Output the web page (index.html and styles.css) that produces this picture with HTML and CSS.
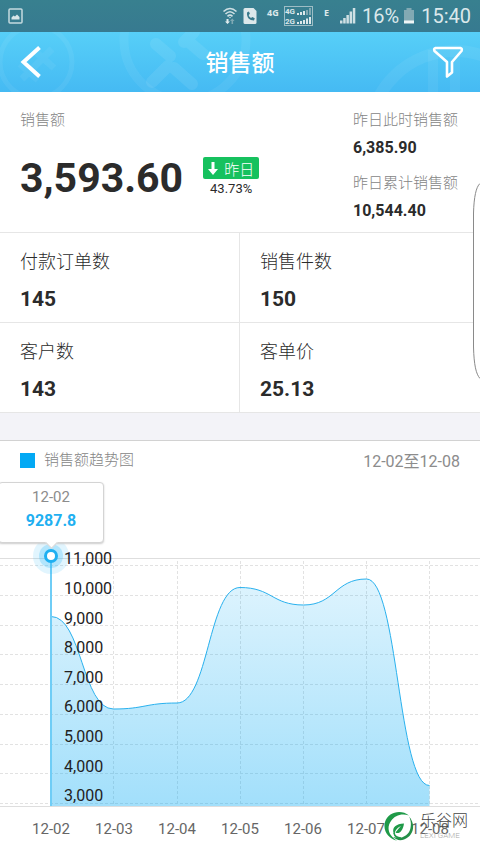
FILE: index.html
```html
<!DOCTYPE html>
<html lang="zh-CN">
<head>
<meta charset="utf-8">
<meta name="viewport" content="width=device-width, initial-scale=1">
<title>销售额</title>
<link rel="stylesheet" href="styles.css">
</head>
<body>
<div class="status-bar">
  <svg class="status-picture" viewBox="0 0 16 16" width="16" height="16" aria-hidden="true">
    <rect x="1" y="1" width="13" height="14" rx="1" fill="none" stroke="#c5dadf" stroke-width="1.5"/>
    <path d="M3.500 11.500V9.500L5.500 7.500L7 8.500L9 6.500L11.500 9V11.500Z" fill="#d8e6e9"/>
  </svg>
  <div class="status-right">
    <svg viewBox="222 4 136 24" width="136" height="24" aria-hidden="true">
      <g fill="none" stroke="#cfe0e4" stroke-width="1.6">
        <path d="M223.500 11.500Q230 5.500 236.500 11.500M225.500 14Q230 9.500 234.500 14M227.500 16.300Q230 14 232.500 16.300"/>
      </g>
      <path d="M226.500 19h2v2.500h1.500l-2.500 2.500l-2.500-2.500h1.500z" fill="#e3edef"/>
      <path d="M231.500 24v-3h-1.500l2.300-2.500l2.300 2.500h-1.500v3z" fill="#7fa8b3"/>
      <path d="M229 17h2l-1 1.500z" fill="#cfe0e4"/>
      <path d="M245 8h8.500l3 3v11.500a1.500 1.500 0 0 1-1.500 1.500h-10a1.500 1.500 0 0 1-1.500-1.500v-13a1.500 1.500 0 0 1 1.500-1.500z" fill="#dce8eb"/>
      <path d="M247 12.500c-.5 5 2.500 8 7 8l.8-2.200l-2.500-1.300l-1.300 1c-1.500-.8-2-1.800-2.300-3l1.200-1.200l-1-2.300z" fill="#38798b"/>
      <text x="267" y="16" class="tiny-net">4G</text>
      <rect x="284.500" y="6.500" width="28" height="19" fill="none" stroke="#9dbdc5"/>
      <text x="285" y="14" class="tiny-net dual">4G</text>
      <text x="285" y="24" class="tiny-net dual">2G</text>
      <path d="M297 13h2v2h-2zM300 12h2v3h-2zM303 11h2v4h-2z M297 22h2v2h-2zM300 21h2v3h-2zM303 20h2v4h-2zM306 18.500h2v5.500h-2zM309 17h2v7h-2z" fill="#dce8eb"/>
      <path d="M306 10h2v5h-2zM309 8h2v7h-2z" fill="#82a9b3"/>
      <text x="324" y="16" class="tiny-net">E</text>
      <path d="M340 20.500h2.500v3h-2.500zM343.200 18h2.500v5.500h-2.500zM346.400 15h2.500v8.500h-2.500zM349.600 11.500h2.500v12h-2.500zM352.800 8h2.500v15.500h-2.500z" fill="#cfe0e4"/>
    </svg>
    <span class="status-battery">16%</span>
    <svg viewBox="0 0 12 16" width="12" height="16" aria-hidden="true">
      <path d="M3.500 0h5v2h2.500v12.500h-10v-12.500h2.500z" fill="#82a9b3"/>
      <path d="M1 12.500h10v3h-10z" fill="#eef5f6"/>
    </svg>
    <time class="status-clock">15:40</time>
  </div>
</div>

<header class="nav-bar">
  <svg class="nav-pattern" viewBox="0 0 480 60" preserveAspectRatio="xMidYMid slice" aria-hidden="true">
    <g fill="none" stroke="#ffffff">
      <g stroke-opacity=".06">
        <circle cx="36" cy="30" r="36" stroke-width="5"/>
        <circle cx="185" cy="8" r="61" stroke-width="9"/>
        <circle cx="455" cy="105" r="86" stroke-width="12"/>
      </g>
      <path d="M156 12l14 12M189 10l14 12M174 36l18 16M152 50l16-16M184 10l10-10" stroke-opacity=".08" stroke-linecap="round" stroke-width="12"/>
      <path d="M433 18v50M455 16v50" stroke-opacity=".06" stroke-width="10"/>
      <path d="M20 32l18 16M36 20l18 16M22 47l30-30" stroke-opacity=".05" stroke-width="7"/>
    </g>
  </svg>
  <button class="icon-button" type="button" aria-label="返回">
    <svg viewBox="0 0 22 34" width="22" height="34"><path d="M19.500 2.500L3.500 17L19.500 31.500" fill="none" stroke="#fff" stroke-width="4"/></svg>
  </button>
  <h1 class="nav-title">销售额</h1>
  <button class="icon-button" type="button" aria-label="筛选">
    <svg viewBox="0 0 32 34" width="32" height="34"><path d="M3.500 3h25q2 .5 1 3L20 17v10.500l-5 4V17L2.500 6q-1-2.500 1-3z" fill="none" stroke="#fff" stroke-width="2.600" stroke-linejoin="round"/></svg>
  </button>
</header>

<main>
  <section class="summary">
    <div class="summary-main">
      <h2 class="label">销售额</h2>
      <div class="summary-figure">
        <strong class="total">3,593.60</strong>
        <div class="change">
          <span class="badge">
            <svg viewBox="0 0 10 13" width="10" height="13" aria-hidden="true"><path d="M3.500 0h3v7h3.500l-5 6l-5-6h3.500z" fill="#fff"/></svg>
            昨日
          </span>
          <span class="percent">43.73%</span>
        </div>
      </div>
    </div>
    <dl class="summary-side">
      <dt class="label">昨日此时销售额</dt>
      <dd>6,385.90</dd>
      <dt class="label">昨日累计销售额</dt>
      <dd>10,544.40</dd>
    </dl>
  </section>

  <dl class="metrics">
    <div class="metric"><dt>付款订单数</dt><dd>145</dd></div>
    <div class="metric"><dt>销售件数</dt><dd>150</dd></div>
    <div class="metric"><dt>客户数</dt><dd>143</dd></div>
    <div class="metric"><dt>客单价</dt><dd>25.13</dd></div>
  </dl>

  <section class="trend">
    <div class="trend-head">
      <h2 class="label legend">销售额趋势图</h2>
      <span class="range">12-02至12-08</span>
    </div>
    <div class="chart">
      <svg class="chart-plot" viewBox="0 480 480 373" role="img" aria-label="销售额趋势图">
        <defs>
          <linearGradient id="area" x1="0" y1="579" x2="0" y2="806" gradientUnits="userSpaceOnUse">
            <stop offset="0" stop-color="#03a9f4" stop-opacity=".13"/>
            <stop offset="1" stop-color="#03a9f4" stop-opacity=".37"/>
          </linearGradient>
        </defs>
        <g class="grid">
          <path d="M0 565.500H480M0 595.500H480M0 625.500H480M0 654.500H480M0 684.500H480M0 714.500H480M0 744.500H480M0 773.500H480M0 803.500H480"/>
          <path d="M113.500 561V806M177.500 561V806M240.500 561V806M303.500 561V806M366.500 561V806M429.500 561V806"/>
        </g>
        <path d="M0 558.500H480M0 806.500H480" stroke="#dedede"/>
        <path fill="url(#area)" d="M51 616.500C82 616.500 82 709 113.500 709C145 709 145 703 177 703C208.500 703 208.500 587.500 240 587.500C272 587.500 272 605 303.500 605C335 605 335 579 366.500 579C398 579 398 785.500 429.500 785.500V806H51Z"/>
        <path fill="none" stroke="#29b1ee" d="M51 616.500C82 616.500 82 709 113.500 709C145 709 145 703 177 703C208.500 703 208.500 587.500 240 587.500C272 587.500 272 605 303.500 605C335 605 335 579 366.500 579C398 579 398 785.500 429.500 785.500"/>
        <path d="M51 556V806" stroke="#6fcdf6" stroke-width="2"/>
        <circle cx="51" cy="556" r="18" fill="#29b6f6" fill-opacity=".14"/>
        <circle cx="51" cy="556" r="12" fill="#29b6f6" fill-opacity=".25"/>
        <circle cx="51" cy="556" r="5.500" fill="#fff" stroke="#1fb0f1" stroke-width="3"/>
        <g class="y-axis">
          <text x="64" y="564">11,000</text>
          <text x="64" y="594">10,000</text>
          <text x="64" y="624">9,000</text>
          <text x="64" y="653">8,000</text>
          <text x="64" y="683">7,000</text>
          <text x="64" y="712">6,000</text>
          <text x="64" y="742">5,000</text>
          <text x="64" y="772">4,000</text>
          <text x="64" y="801">3,000</text>
        </g>
        <g class="x-axis">
          <text x="51" y="834">12-02</text>
          <text x="114" y="834">12-03</text>
          <text x="177" y="834">12-04</text>
          <text x="240" y="834">12-05</text>
          <text x="303" y="834">12-06</text>
          <text x="366" y="834">12-07</text>
          <text x="430" y="834">12-08</text>
        </g>
      </svg>
      <div class="tooltip">
        <span>12-02</span>
        <strong>9287.8</strong>
      </div>
    </div>
  </section>
</main>

<svg class="edge-handle" viewBox="0 0 8 196" width="8" height="196" aria-hidden="true">
  <path d="M8 .5C4 4 2 14 1.500 30V164C2 182 4 191 8 195.500" fill="#fff" stroke="#8a8a8a"/>
</svg>

<div class="site-mark">
  <svg viewBox="0 0 30 30" width="30" height="30" aria-hidden="true">
    <circle cx="15" cy="15" r="13" fill="#fff"/>
    <path d="M25 4.500C17-2 4 1 1 11C-1.500 20 5 28 13 29.500C5 25 2 17 7 10C11 4 18 2 25 4.500Z" fill="#1f9a48"/>
    <path d="M25 5.500C32 13 30 25 20 28.500C16 30 12 29 9 26C17 28.500 25 25 26.500 17C27.200 13 27 9 25 5.500Z" fill="#238f48"/>
    <path d="M9.500 22C8 16 12 13 20 12.500C19 20 15 23.500 11.500 21.500C13 19.500 14.500 17.500 17 15C13 17 11 19 10.500 24Z" fill="#1f9a48"/>
    <path d="M10 22Q11 27 17 27" fill="none" stroke="#1f9a48" stroke-width="1.500"/>
  </svg>
  <div class="site-name">
    <span>乐谷网</span>
    <small>LEXI GAME</small>
  </div>
</div>
</body>
</html>
```
FILE: styles.css
```css
* {
  box-sizing: border-box;
}

body {
  position: relative;
  margin: 0;
  overflow-x: hidden;
  background: #fff;
  color: #2b2b2b;
  font-family: Roboto, "Noto Sans CJK SC", sans-serif;
}

h1, h2, dl, dd {
  margin: 0;
}

.status-bar {
  display: flex;
  align-items: center;
  justify-content: space-between;
  height: 32px;
  padding: 0 9px 0 8px;
  background: linear-gradient(#38808f, #377a90);
  color: #dbe8eb;
}

.status-right {
  display: flex;
  align-items: center;
  gap: 4px;
  font-size: 20px;
}

.status-clock {
  margin-left: 2px;
}

.tiny-net {
  fill: #dce8eb;
  font-family: "Noto Sans", sans-serif;
  font-size: 9px;
  font-weight: 700;
}

.tiny-net.dual {
  font-family: Roboto, sans-serif;
  font-size: 8px;
}

.nav-bar {
  position: relative;
  display: flex;
  align-items: center;
  justify-content: space-between;
  height: 60px;
  padding: 0 16px 0 20px;
  background: linear-gradient(#57cff8, #45baf3);
  color: #fff;
}

.nav-pattern {
  position: absolute;
  inset: 0;
  width: 100%;
  height: 100%;
}

.nav-title {
  position: absolute;
  inset: 0;
  font-size: 23px;
  font-weight: 500;
  line-height: 64px;
  text-align: center;
  pointer-events: none;
}

.icon-button {
  position: relative;
  display: flex;
  padding: 0;
  border: 0;
  background: none;
}

.label {
  color: #858585;
  font-size: 15px;
  font-weight: 300;
  line-height: 24px;
}

.summary {
  display: flex;
  justify-content: space-between;
  height: 141px;
  padding: 16px 22px 0 20px;
  border-bottom: 1px solid #e6e6e6;
}

.summary-figure {
  display: flex;
  align-items: center;
  gap: 20px;
  padding-top: 22px;
}

.total {
  font-size: 41px;
  line-height: 48px;
}

.change {
  display: flex;
  flex-direction: column;
  align-items: center;
}

.badge {
  display: flex;
  align-items: center;
  gap: 6px;
  height: 22px;
  padding: 0 5px;
  border-radius: 2px;
  background: #16c15e;
  color: #fff;
  font-size: 15px;
  font-weight: 300;
}

.percent {
  font-size: 13px;
  line-height: 20px;
}

.summary-side dd {
  font-size: 16px;
  font-weight: 700;
  line-height: 32px;
  padding-bottom: 7px;
}

.metrics {
  display: grid;
  grid-template-columns: 1fr 1fr;
}

.metric {
  height: 90px;
  padding: 15px 20px;
  border-bottom: 1px solid #e6e6e6;
}

.metric:nth-child(odd) {
  border-right: 1px solid #e6e6e6;
}

.metric dt {
  font-size: 18px;
  font-weight: 300;
  line-height: 28px;
}

.metric dd {
  padding-top: 7px;
  font-size: 21px;
  font-weight: 700;
  line-height: 32px;
}

.trend {
  border-top: 27px solid #f3f3f8;
  box-shadow: inset 0 1px #d2d2d2, 0 -1px #d2d2d2;
}

.trend-head {
  display: flex;
  align-items: center;
  justify-content: space-between;
  height: 40px;
  padding: 0 20px;
}

.legend {
  display: flex;
  align-items: center;
  gap: 9px;
}

.legend::before {
  width: 15px;
  height: 15px;
  background: #03a9f4;
  content: "";
}

.range {
  color: #8c8c8c;
  font-size: 16px;
}

.chart {
  position: relative;
}

.chart-plot {
  display: block;
  width: 100%;
}

.grid {
  fill: none;
  stroke: #e2e2e2;
  stroke-dasharray: 3 2;
}

.y-axis {
  fill: #222;
  font-size: 16px;
}

.x-axis {
  fill: #666;
  font-size: 15px;
  text-anchor: middle;
}

.tooltip {
  position: absolute;
  top: 2px;
  left: -2px;
  display: flex;
  flex-direction: column;
  align-items: center;
  width: 106px;
  height: 61px;
  padding-top: 2px;
  border: 1px solid #d4d4d4;
  border-radius: 4px;
  background: #fff;
  box-shadow: 0 1px 2px #ccc;
  color: #8c8c8c;
  font-size: 15px;
  line-height: 24px;
}

.tooltip::after {
  position: absolute;
  bottom: -5px;
  left: 48px;
  width: 8px;
  height: 8px;
  border: solid #d4d4d4;
  border-width: 0 1px 1px 0;
  background: #fff;
  content: "";
  transform: rotate(45deg);
}

.tooltip strong {
  color: #1fb0f1;
  font-size: 16px;
}

.edge-handle {
  position: absolute;
  top: 183px;
  right: 0;
}

.site-mark {
  position: absolute;
  right: 12px;
  bottom: 12px;
  display: flex;
  align-items: center;
  gap: 6px;
}

.site-name {
  display: flex;
  flex-direction: column;
  color: #444;
  font-size: 16px;
  font-weight: 300;
  line-height: 20px;
}

.site-name small {
  color: #aaa;
  font-size: 8px;
  line-height: 10px;
}
```
